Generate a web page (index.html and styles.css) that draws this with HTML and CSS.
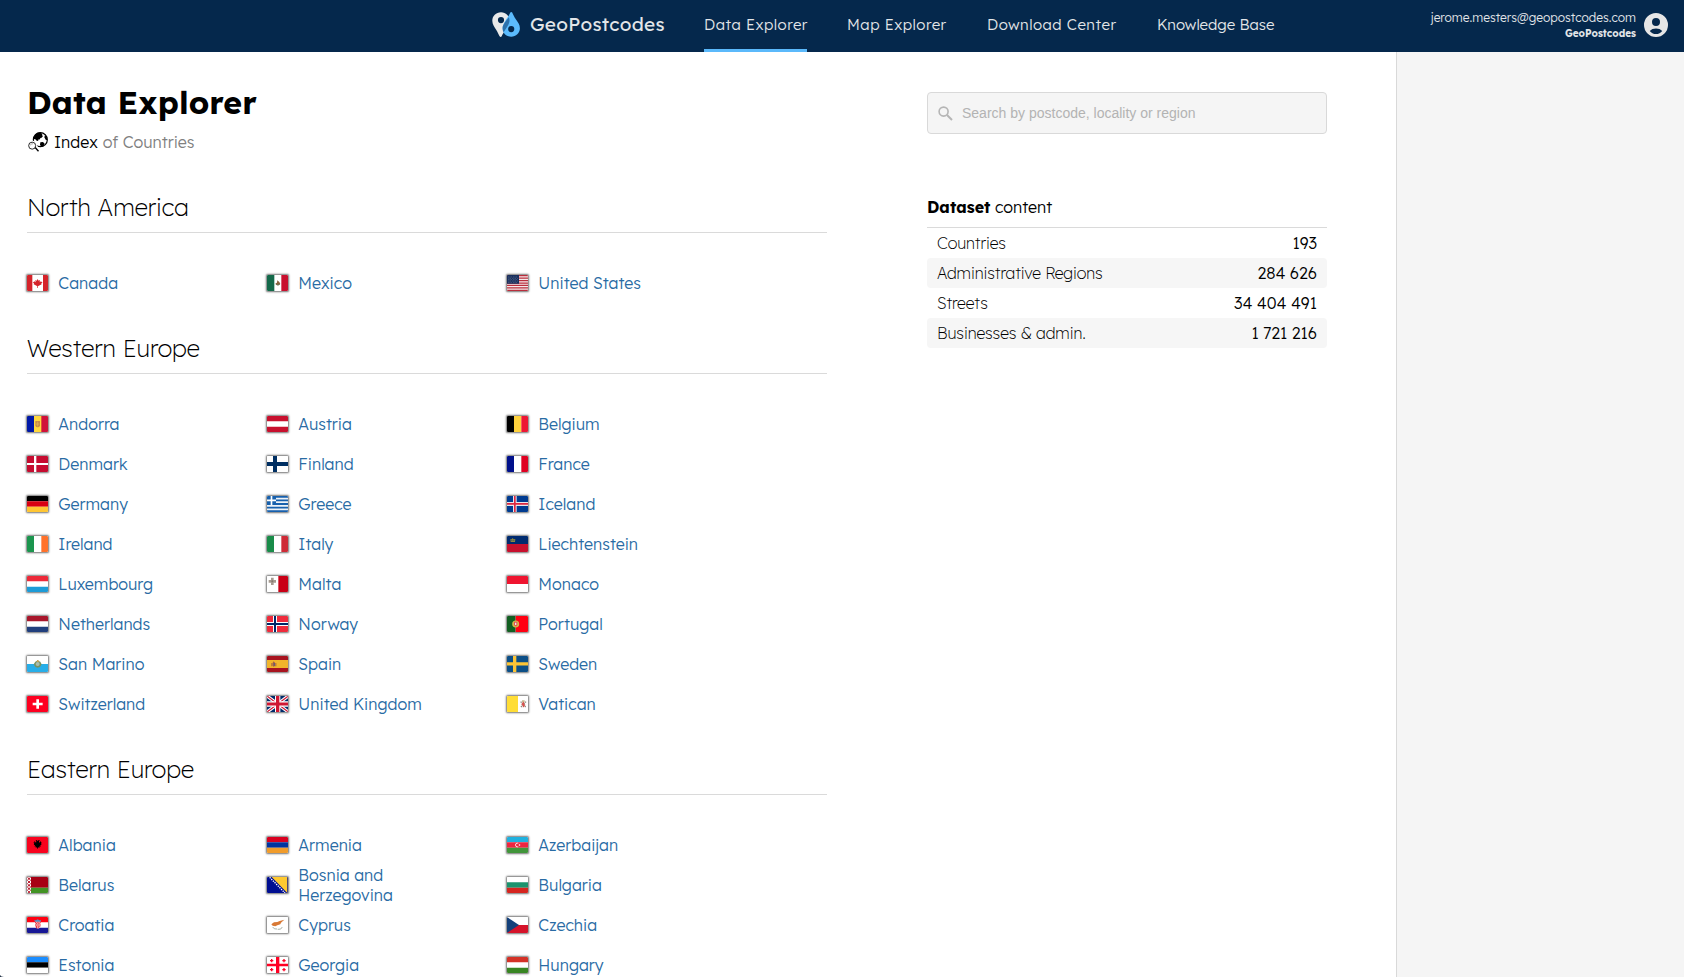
FILE: index.html
```html
<!DOCTYPE html>
<html lang="en">
<head>
<meta charset="utf-8">
<title>GeoPostcodes - Data Explorer</title>
<link rel="stylesheet" href="styles.css">
</head>
<body>
<header class="topbar">
  <a class="brand">
    <svg class="brand-mark" viewBox="0 0 28 25"><path fill="#e9e9e9" fill-rule="evenodd" d="M9 .3C4 .3.3 4 .3 8.700c0 3.500 2 6 4 9.300 1.500 2.500 2.400 4.500 3.300 6.300.5.900 1.600.9 2.100 0C11 21 17.500 13 17.500 8.500 17.500 4 14 .3 9 .3zM9 5a3.100 3.100 0 1 1 0 6.200A3.100 3.100 0 0 1 9 5z"/><path fill="#5bbbfd" fill-rule="evenodd" d="M18.300.6c.5-.8 1.400-.8 1.900 0 .8 2 1.800 4 3.800 6.900 2.200 3.300 3.900 5.300 3.900 8.700 0 4.800-3.900 8.500-8.700 8.500s-8.600-3.700-8.600-8.500c0-5 6-11.500 7.700-15.600zM19.200 14a3.100 3.100 0 1 0 0 6.200 3.100 3.100 0 0 0 0-6.200z"/><path fill="#2d71ab" d="M16.800 5.300C14 9 10.600 12.700 10.600 16.200c0 1.500.4 2.900 1 4C14.500 16 17.500 12 17.500 8.500c0-1.200-.2-2.200-.7-3.200z"/></svg>
    <span class="brand-name">GeoPostcodes</span>
  </a>
  <nav class="nav">
    <a class="nav-link nav-data active">Data Explorer</a>
    <a class="nav-link nav-map">Map Explorer</a>
    <a class="nav-link nav-download">Download Center</a>
    <a class="nav-link nav-base">Knowledge Base</a>
  </nav>
  <div class="user">
    <div class="user-text"><span class="user-mail">jerome.mesters@geopostcodes.com</span><span class="user-org">GeoPostcodes</span></div>
    <svg class="user-icon" viewBox="0 0 24 24"><path fill="#e6e6e6" fill-rule="evenodd" d="M12 0a12 12 0 1 0 0 24 12 12 0 0 0 0-24zM12 5a4 4 0 1 1 0 8 4 4 0 0 1 0-8zM5.800 17.900C7.200 16.200 9.500 15.400 12 15.400s4.800.8 6.200 2.500C16.800 20 14.600 21 12 21s-4.800-1-6.200-3.100z"/></svg>
  </div>
</header>
<div class="page">
  <main class="content">
    <div class="index">
      <h1 class="title">Data Explorer</h1>
      <p class="subtitle">
        <svg class="globe" viewBox="0 0 60 60"><circle cx="37" cy="23" r="21" fill="#fff" stroke="#000" stroke-width="3.500"/><path d="M18 14C22 6 30 1 38 2l5 4-1 4 3 2-4 5-4 1-1 4-6 1 1 4-5-1-4-4-5-1zM37 31l8-1 5 5-3 7-6 3-5-6zM51 9l5 6 2 10-5-2-4-7z"/><circle cx="13" cy="41" r="14.500" fill="#fff"/><path d="M20 43l5-5 14 18-6 4z" fill="#fff"/><circle cx="12.500" cy="41" r="10.500" fill="#fff" stroke="#000" stroke-width="2.500"/><path d="M8 40c0-4 4-6 7-4" fill="none" stroke="#777" stroke-width="2"/><path d="M20 48l3-3 10 11-3 3z"/></svg>
        <span class="sub-strong">Index</span> <span class="sub-muted">of Countries</span>
      </p>

      <section class="region">
        <h2 class="region-title">North America</h2>
        <ul class="countries">
          <li class="country"><svg class="flag" viewBox="0 0 64 48"><path fill="#fff" d="M0 0h64v48H0z"/><path fill="#d5232a" d="M0 0h16v48H0zM48 0h16v48H48zM32 12l3 5 4-2-1 7 4-3 2 2 3 1-4 3 1 3-10 5-1 1v5h-2v-5l-1-1-10-5 1-3-4-3 3-1 2-2 4 3-1-7 4 2z"/></svg><a>Canada</a></li>
          <li class="country"><svg class="flag" viewBox="0 0 64 48"><path fill="#fff" d="M0 0h64v48H0z"/><path fill="#13694a" d="M0 0h22v48H0z"/><path fill="#c8102e" d="M43 0h21v48H43z"/><path fill="#8b6340" d="M31 16l6 5 3 6-5 4-8-1-1-5 4-2z"/><path stroke="#5b806d" stroke-width="2" fill="none" d="M26 27q6 7 13 1"/></svg><a>Mexico</a></li>
          <li class="country"><svg class="flag" viewBox="0 0 64 48"><path fill="#f6e9ea" d="M0 0h64v48H0z"/><path fill="#b92e3c" d="M0 0h64v3.700H0zM0 7.400h64v3.700H0zM0 14.800h64v3.700H0zM0 22.200h64v3.700H0zM0 29.500h64v3.700H0zM0 36.900h64v3.700H0zM0 44.300h64V48H0z"/><path fill="#192f5d" d="M0 0h36v26H0z"/><path stroke="#8392ac" stroke-width="1.800" stroke-dasharray="2 3" d="M3 6h30M5 10h27M3 14h30M5 18h27M3 22h30"/></svg><a>United States</a></li>
        </ul>
      </section>

      <section class="region">
        <h2 class="region-title">Western Europe</h2>
        <ul class="countries">
          <li class="country"><svg class="flag" viewBox="0 0 64 48"><path fill="#ffd83d" d="M0 0h64v48H0z"/><path fill="#0018a8" d="M0 0h21v48H0z"/><path fill="#d0103a" d="M43 0h21v48H43z"/><path fill="#c98b45" d="M25 15h14v14q-2 5-7 5t-7-5z"/><path stroke="#e4bd59" stroke-width="2" d="M32 17v14M27 24h10"/></svg><a>Andorra</a></li>
          <li class="country"><svg class="flag" viewBox="0 0 64 48"><path fill="#c8102e" d="M0 0h64v48H0z"/><path fill="#fff" d="M0 16h64v16H0z"/></svg><a>Austria</a></li>
          <li class="country"><svg class="flag" viewBox="0 0 64 48"><path d="M0 0h21v48H0z"/><path fill="#ffd23c" d="M21 0h22v48H21z"/><path fill="#ed1734" d="M43 0h21v48H43z"/></svg><a>Belgium</a></li>
          <li class="country"><svg class="flag" viewBox="0 0 64 48"><path fill="#c60c30" d="M0 0h64v48H0z"/><path fill="#fff" d="M21 0h7v48h-7zM0 21h64v6H0z"/></svg><a>Denmark</a></li>
          <li class="country"><svg class="flag" viewBox="0 0 64 48"><path fill="#fff" d="M0 0h64v48H0z"/><path fill="#002f63" d="M18 0h12v48H18zM0 18h64v12H0z"/></svg><a>Finland</a></li>
          <li class="country"><svg class="flag" viewBox="0 0 64 48"><path fill="#fff" d="M0 0h64v48H0z"/><path fill="#00108b" d="M0 0h21v48H0z"/><path fill="#df0022" d="M43 0h21v48H43z"/></svg><a>France</a></li>
          <li class="country"><svg class="flag" viewBox="0 0 64 48"><path d="M0 0h64v16H0z"/><path fill="#d80012" d="M0 16h64v16H0z"/><path fill="#ffc633" d="M0 32h64v16H0z"/></svg><a>Germany</a></li>
          <li class="country"><svg class="flag" viewBox="0 0 64 48"><path fill="#edf2f8" d="M0 0h64v48H0z"/><path fill="#1760ad" d="M0 0h64v5.300H0zM0 10.700h64V16H0zM0 21.300h64v5.400H0zM0 32h64v5.300H0zM0 42.700h64V48H0zM0 0h27v26.700H0z"/><path fill="#fff" d="M11 0h5v26.700h-5zM0 10.700h27V16H0z"/></svg><a>Greece</a></li>
          <li class="country"><svg class="flag" viewBox="0 0 64 48"><path fill="#003b91" d="M0 0h64v48H0z"/><path fill="#e6e7ed" d="M18 0h11v48H18zM0 18h64v12H0z"/><path fill="#dc2740" d="M21 0h5v48h-5zM0 21h64v5.500H0z"/></svg><a>Iceland</a></li>
          <li class="country"><svg class="flag" viewBox="0 0 64 48"><path fill="#fff" d="M0 0h64v48H0z"/><path fill="#1b954e" d="M0 0h21v48H0z"/><path fill="#ff722b" d="M43 0h21v48H43z"/></svg><a>Ireland</a></li>
          <li class="country"><svg class="flag" viewBox="0 0 64 48"><path fill="#fff" d="M0 0h64v48H0z"/><path fill="#198c49" d="M0 0h21v48H0z"/><path fill="#ce2b37" d="M43 0h21v48H43z"/></svg><a>Italy</a></li>
          <li class="country"><svg class="flag" viewBox="0 0 64 48"><path fill="#002b6f" d="M0 0h64v24H0z"/><path fill="#c8102e" d="M0 24h64v24H0z"/><path fill="#8f853f" d="M10 9l4 1 3-4 3 4 5-1-1 9H11z"/><path fill="#2a4760" d="M13 12h3v2h-3zM19 12h3v2h-3z"/></svg><a>Liechtenstein</a></li>
          <li class="country"><svg class="flag" viewBox="0 0 64 48"><path fill="#fff" d="M0 16h64v16H0z"/><path fill="#ed2939" d="M0 0h64v16H0z"/><path fill="#1d9bd7" d="M0 32h64v16H0z"/></svg><a>Luxembourg</a></li>
          <li class="country"><svg class="flag" viewBox="0 0 64 48"><path fill="#fff" d="M0 0h34v48H0z"/><path fill="#c90016" d="M34 0h30v48H34z"/><path fill="#a69b91" d="M12 5h8v7h7v8h-7v7h-8v-7H5v-8h7z"/><circle cx="16" cy="16" r="3" fill="#81776d"/></svg><a>Malta</a></li>
          <li class="country"><svg class="flag" viewBox="0 0 64 48"><path fill="#fff" d="M0 24h64v24H0z"/><path fill="#ef1530" d="M0 0h64v24H0z"/></svg><a>Monaco</a></li>
          <li class="country"><svg class="flag" viewBox="0 0 64 48"><path fill="#fff" d="M0 16h64v16H0z"/><path fill="#a8162b" d="M0 0h64v16H0z"/><path fill="#213f7d" d="M0 32h64v16H0z"/></svg><a>Netherlands</a></li>
          <li class="country"><svg class="flag" viewBox="0 0 64 48"><path fill="#ef2b3c" d="M0 0h64v48H0z"/><path fill="#fff" d="M18 0h12v48H18zM0 18h64v12H0z"/><path fill="#002868" d="M21 0h6v48h-6zM0 21h64v6H0z"/></svg><a>Norway</a></li>
          <li class="country"><svg class="flag" viewBox="0 0 64 48"><path fill="#125f21" d="M0 0h26v48H0z"/><path fill="#f01" d="M26 0h38v48H26z"/><circle cx="26" cy="24" r="10.500" fill="#d3b84a"/><path fill="#e65055" d="M21 17h10v10q-5 7-10 0z"/><path fill="#eee" d="M24 20h4v7h-4z"/></svg><a>Portugal</a></li>
          <li class="country"><svg class="flag" viewBox="0 0 64 48"><path fill="#fff" d="M0 0h64v24H0z"/><path fill="#28aee8" d="M0 24h64v24H0z"/><path fill="#799362" d="M20 25l5-8 4-2 3-3 3 3 5 2 4 8-5 8-7 2-7-2z"/><circle cx="32" cy="24" r="6" fill="#a9bdad"/><path fill="#d5a249" d="M30 13h5v5h-5z"/></svg><a>San Marino</a></li>
          <li class="country"><svg class="flag" viewBox="0 0 64 48"><path fill="#a8141f" d="M0 0h64v48H0z"/><path fill="#f1b52b" d="M0 12h64v24H0z"/><path fill="#a76242" d="M13 21h3v10h-3zM25 21h3v10h-3zM17 20l3-4 4 4v9q-4 6-7 0z"/><path fill="#695c79" d="M20 21h4v8h-4z"/></svg><a>Spain</a></li>
          <li class="country"><svg class="flag" viewBox="0 0 64 48"><path fill="#0c4f87" d="M0 0h64v48H0z"/><path fill="#fdc536" d="M18 0h10v48H18zM0 19h64v9.500H0z"/></svg><a>Sweden</a></li>
          <li class="country"><svg class="flag" viewBox="0 0 64 48"><path fill="#fe0020" d="M0 0h64v48H0z"/><path fill="#fff" d="M28 10h8v10h11v8H36v10h-8V28H17v-8h11z"/></svg><a>Switzerland</a></li>
          <li class="country"><svg class="flag" viewBox="0 0 64 48"><path fill="#012b6a" d="M0 0h64v48H0z"/><path stroke="#fff" stroke-width="10" d="M0 0l64 48M64 0L0 48"/><path stroke="#cf1733" stroke-width="3.500" d="M0 0l64 48M64 0L0 48"/><path fill="#fff" d="M24 0h16v48H24zM0 16h64v16H0z"/><path fill="#cf1733" d="M27 0h10v48H27zM0 19.500h64v9H0z"/></svg><a>United Kingdom</a></li>
          <li class="country"><svg class="flag" viewBox="0 0 64 48"><path fill="#ffdd36" d="M0 0h33v48H0z"/><path fill="#fff" d="M33 0h31v48H33z"/><path stroke="#8d897c" stroke-width="4" stroke-dasharray="4 2" d="M41 17l16 17M57 17L41 34"/><path fill="#c9b98f" d="M45 13h8v6h-8z"/><path fill="#d6544f" d="M46 20l3-3 3 3-1 4 4 2-5 8h-3l1-5-5-3z"/></svg><a>Vatican</a></li>
        </ul>
      </section>

      <section class="region">
        <h2 class="region-title">Eastern Europe</h2>
        <ul class="countries">
          <li class="country"><svg class="flag" viewBox="0 0 64 48"><path fill="#f8021e" d="M0 0h64v48H0z"/><path d="M26 9l4 1 2 3 2-3 4-1-2 5 1 3 5-5 0 5 3-1-3 5 2 2-4 2 1 4-4-1 1 4-4-1-2 6-2-6-4 1 1-4-4 1 1-4-4-2 2-2-3-5 3 1 0-5 5 5 1-3z"/></svg><a>Albania</a></li>
          <li class="country"><svg class="flag" viewBox="0 0 64 48"><path fill="#d90020" d="M0 0h64v16H0z"/><path fill="#0034a0" d="M0 16h64v16H0z"/><path fill="#f19c2b" d="M0 32h64v16H0z"/></svg><a>Armenia</a></li>
          <li class="country"><svg class="flag" viewBox="0 0 64 48"><path fill="#20b1df" d="M0 0h64v16H0z"/><path fill="#ed2540" d="M0 16h64v16H0z"/><path fill="#41953a" d="M0 32h64v16H0z"/><circle cx="31" cy="24" r="5.500" fill="none" stroke="#fff" stroke-width="2.500"/><path fill="#ed2540" d="M33 19h6v10h-6z"/><circle cx="37.500" cy="24" r="2.500" fill="#fff"/></svg><a>Azerbaijan</a></li>
          <li class="country"><svg class="flag" viewBox="0 0 64 48"><path fill="#a70014" d="M0 0h64v32H0z"/><path fill="#429324" d="M0 32h64v16H0z"/><path fill="#fff" d="M0 0h12v48H0z"/><path stroke="#b50d22" stroke-width="2.500" fill="none" d="M1 0l10 10L1 20l10 10L1 40l8 8M11 0L1 10l10 10L1 30l10 10-8 8M3 5h6M3 15h6M3 25h6M3 35h6"/></svg><a>Belarus</a></li>
          <li class="country"><svg class="flag" viewBox="0 0 64 48"><path fill="#000e91" d="M0 0h64v48H0z"/><path fill="#ffc92f" d="M14 0h47v48z"/><path stroke="#fff" stroke-width="4" stroke-dasharray="4 3" d="M8 1l46 47"/></svg><a>Bosnia and<br>Herzegovina</a></li>
          <li class="country"><svg class="flag" viewBox="0 0 64 48"><path fill="#fff" d="M0 0h64v16H0z"/><path fill="#1b936d" d="M0 16h64v16H0z"/><path fill="#d6251f" d="M0 32h64v16H0z"/></svg><a>Bulgaria</a></li>
          <li class="country"><svg class="flag" viewBox="0 0 64 48"><path fill="#fff" d="M0 16h64v16H0z"/><path fill="#f01" d="M0 0h64v16H0z"/><path fill="#171796" d="M0 32h64v16H0z"/><path fill="#4e91c5" d="M22 9l5 1 5-3 5 3 5-1-2 7H24z"/><path fill="#f4b6b9" d="M24 14h17v14q-3 7-8 7t-9-7z"/><path stroke="#ed3342" stroke-width="3.500" stroke-dasharray="3.500 3.500" d="M24 16h17M27 20h14M24 24h17M27 28h14M27 32h9"/></svg><a>Croatia</a></li>
          <li class="country"><svg class="flag" viewBox="0 0 64 48"><path fill="#fff" d="M0 0h64v48H0z"/><path fill="#d87935" d="M13 22l8-6 10-1 7-3 14-4-10 9-2 5-9 3-6 3-8-2z"/><path stroke="#7c897a" stroke-width="2" fill="none" d="M17 30q4 8 13 6M32 37q11 2 14-7"/></svg><a>Cyprus</a></li>
          <li class="country"><svg class="flag" viewBox="0 0 64 48"><path fill="#fff" d="M0 0h64v24H0z"/><path fill="#d5132a" d="M0 24h64v24H0z"/><path fill="#14417b" d="M0 0l36 24L0 48z"/></svg><a>Czechia</a></li>
          <li class="country"><svg class="flag" viewBox="0 0 64 48"><path fill="#1b8dff" d="M0 0h64v16H0z"/><path d="M0 16h64v16H0z"/><path fill="#fff" d="M0 32h64v16H0z"/></svg><a>Estonia</a></li>
          <li class="country"><svg class="flag" viewBox="0 0 64 48"><path fill="#fff" d="M0 0h64v48H0z"/><path fill="#ff0023" d="M27 0h10v48H27zM0 20h64v8H0zM12 6h4v3h3v4h-3v3h-4v-3H9V9h3zM49 6h4v3h3v4h-3v3h-4v-3h-3V9h3zM12 33h4v3h3v4h-3v3h-4v-3H9v-4h3zM49 33h4v3h3v4h-3v3h-4v-3h-3v-4h3z"/></svg><a>Georgia</a></li>
          <li class="country"><svg class="flag" viewBox="0 0 64 48"><path fill="#fff" d="M0 16h64v16H0z"/><path fill="#d43227" d="M0 0h64v16H0z"/><path fill="#388522" d="M0 32h64v16H0z"/></svg><a>Hungary</a></li>
        </ul>
      </section>
    </div>

    <aside class="facts">
      <label class="search">
        <svg class="search-icon" viewBox="0 0 15 15"><circle cx="5.600" cy="5.600" r="4.500" fill="none" stroke="#b5b5b5" stroke-width="1.600"/><path d="M9 9l5 5" stroke="#b5b5b5" stroke-width="2"/></svg>
        <input class="search-input" type="text" placeholder="Search by postcode, locality or region">
      </label>
      <h3 class="facts-title"><b>Dataset</b> content</h3>
      <dl class="stats">
        <div class="stat"><dt>Countries</dt><dd>193</dd></div>
        <div class="stat"><dt>Administrative Regions</dt><dd>284 626</dd></div>
        <div class="stat"><dt>Streets</dt><dd>34 404 491</dd></div>
        <div class="stat"><dt>Businesses &amp; admin.</dt><dd>1 721 216</dd></div>
      </dl>
    </aside>
  </main>
  <div class="rail"></div>
</div>
<svg class="corner" viewBox="0 0 4 2"><path fill="#26364a" d="M0 0q1 2 4 2H0z"/></svg>
</body>
</html>
```

FILE: styles.css
```css
* { box-sizing: border-box; }
html, body { height: 100%; }
body {
  margin: 0;
  display: flex;
  flex-direction: column;
  overflow: hidden;
  background: #fff;
  color: #000;
  font: 300 16px/20px Lexend, Inter, "Open Sans", sans-serif;
}
h1, h2, h3, p, ul, dl, dd { margin: 0; padding: 0; }

.topbar {
  flex: none;
  display: flex;
  height: 52px;
  padding: 0 16px 0 492px;
  background: #05284c;
  color: #e2e5e8;
}
.brand { display: flex; align-items: center; width: 212px; padding-bottom: 3px; gap: 10px; }
.brand-mark { width: 28px; height: 25px; }
.brand-name { position: relative; top: -1px; font-size: 19px; font-weight: 400; letter-spacing: .3px; white-space: nowrap; }
.nav { display: flex; gap: 40px; }
.nav-link {
  height: 52px;
  padding-top: 15px;
  font-size: 15px;
  letter-spacing: .5px;
  white-space: nowrap;
}
.nav-data { width: 103px; }
.nav-map { width: 100px; }
.nav-download { width: 130px; }
.nav-base { width: 118px; letter-spacing: 0; }
.active { border-bottom: 3px solid #5bb9fb; }
.user { display: flex; gap: 8px; margin-left: auto; padding-top: 8px; }
.user-text { display: flex; flex-direction: column; align-items: flex-end; }
.user-mail { font-size: 12px; line-height: 19px; }
.user-org { font-size: 10px; line-height: 13px; font-weight: 700; }
.user-icon { width: 24px; height: 24px; margin-top: 5px; }

.page { flex: 1; display: flex; min-height: 0; }
.content { width: 1396px; display: flex; gap: 100px; padding-left: 27px; overflow: hidden; }
.rail { flex: 1; background: #f5f5f5; border-left: 1px solid #d9d9d9; }

.index { width: 800px; }
.title { margin-top: 30px; font-size: 32px; line-height: 40px; font-weight: 700; letter-spacing: .16px; }
.subtitle { display: flex; align-items: center; height: 20px; margin-top: 10px; padding-left: 1px; }
.globe { width: 20px; height: 20px; margin-right: 6px; }
.sub-strong { margin-right: 5px; }
.sub-muted { color: #808080; }

.region { margin-top: 21px; }
.subtitle + .region { margin-top: 31px; }
.region-title {
  height: 50px;
  border-bottom: 1px solid #dadada;
  font-size: 24px;
  line-height: 49px;
  font-weight: 200;
}
.countries {
  display: grid;
  grid-template-columns: repeat(3, 240px);
  grid-auto-rows: 40px;
  padding-top: 30px;
  list-style: none;
}
.country { display: flex; align-items: center; gap: 10px; color: #296ba4; }
.flag {
  width: 21.330px;
  height: 16px;
  border-radius: 1px;
  box-shadow: 0 0 2px 0.500px rgba(0, 0, 0, .55);
}

.facts { width: 400px; padding-top: 40px; }
.search {
  display: flex;
  align-items: center;
  height: 42px;
  padding: 0 10px;
  border: 1px solid #d9d9d9;
  border-radius: 4px;
  background: #f5f5f5;
}
.search-icon { width: 15px; height: 15px; }
.search-input {
  flex: 1;
  margin-left: 9px;
  padding: 0;
  border: 0;
  outline: 0;
  background: none;
  font: 14px "Liberation Sans", Arial, sans-serif;
}
.search-input::placeholder { color: #b3b3b3; }
.facts-title {
  height: 31px;
  margin-top: 63px;
  border-bottom: 1px solid #dadada;
  font-size: 16px;
  font-weight: 300;
}
.facts-title b { font-weight: 700; }
.stat {
  display: flex;
  justify-content: space-between;
  height: 30px;
  padding: 0 10px;
  line-height: 30px;
}
.stat:nth-child(even) { background: #f6f6f6; border-radius: 4px; }
.stat dt { font-weight: 200; letter-spacing: -.1px; }
.stat dd { font-weight: 300; }

.corner { position: absolute; left: 0; bottom: 0; width: 4px; height: 2px; }
```
